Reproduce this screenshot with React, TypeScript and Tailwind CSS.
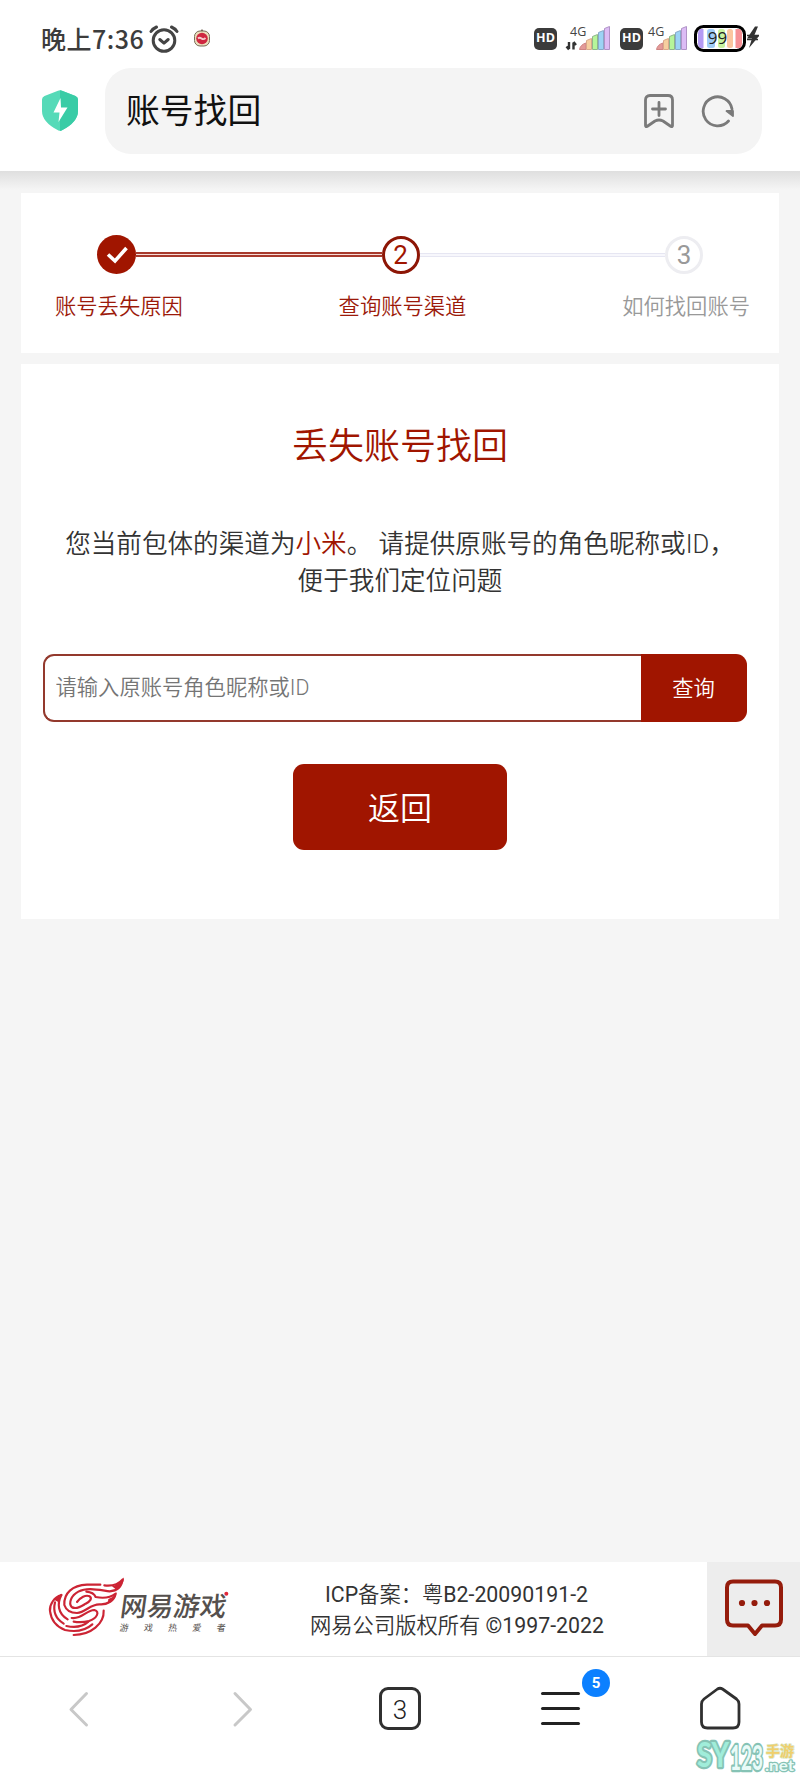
import React from 'react';

const RED = 'bg-[#a01500]';

const StatusBar: React.FC = () => (
  <div className="flex h-[68px] items-center pt-[9px] pl-[41px] pr-[40px] text-[#3c3c3c]">
    <span className="font-['Noto_Sans_CJK_SC',sans-serif] text-[25px] leading-none font-medium tracking-[0.5px]">晚上7:36</span>
    <svg className="ml-[5px] h-[28px] w-[30px]" viewBox="0 0 30 28" fill="none" stroke="#444" strokeWidth="3" strokeLinecap="round">
      <circle cx="15" cy="15.5" r="10.8" />
      <path d="M10.8 14.5l4.2 3.6 4.2-3.6" strokeLinejoin="round" />
      <path d="M2 6.5Q4 3.5 7.5 2M28 6.5Q26 3.5 22.5 2" />
    </svg>
    <svg className="mt-[-2px] ml-[14px] h-[20px] w-[18px]" viewBox="0 0 18 20">
      <path d="M9 1l2 3H7z" fill="#6b5b48" />
      <rect x="1.5" y="3" width="15" height="15" rx="5.5" fill="#ece0bd" stroke="#776c58" />
      <circle cx="9" cy="10.5" r="5.8" fill="#cf2740" />
      <path d="M5 10.5q1.5-1.5 3.5 0t4-.5" fill="none" stroke="#f7c9cd" strokeWidth="1.8" />
    </svg>
    <div className="ml-auto flex items-center">
      <HdBadge />
      <Signal arrows />
      <HdBadge />
      <Signal />
      <Battery />
    </div>
  </div>
);

const HdBadge: React.FC = () => (
  <span className="flex h-[22px] w-[23px] items-center justify-center rounded-[5px] bg-[#3b3b3b] font-['Open_Sans',sans-serif] text-[12.5px] font-bold text-white">HD</span>
);

const bars = [
  { x: 14, h: 7, fill: '#e39a98', edge: '#cf8482' },
  { x: 22, h: 11, fill: '#f6cf9f', edge: '#d9a98a' },
  { x: 28, h: 15, fill: '#b6f59a', edge: '#8fb58b' },
  { x: 34, h: 19, fill: '#9cd3f5', edge: '#88a9c9' },
  { x: 40, h: 23, fill: '#dcbcf5', edge: '#b093c7' },
];

const Signal: React.FC<{ arrows?: boolean }> = ({ arrows }) => (
  <svg className={arrows ? 'mt-[-2px] mr-[9px] ml-[8px] h-[28px] w-[46px]' : 'mt-[-2px] -ml-[1px] mr-[6px] h-[28px] w-[46px]'} viewBox="0 0 46 28">
    <text x={arrows ? 5 : 6} y="11.5" fontFamily="Open Sans, sans-serif" fontSize="12.5" fill="#444">4G</text>
    {arrows && (
      <path d="M4 18v7M1.5 22.5L4 25.5M8.5 25.5v-7M11 21l-2.5-3" fill="none" stroke="#333" strokeWidth="2.4" />
    )}
    {bars.map((b, i) => i === 0
      ? <path key={b.x} d="M14.5 25.5q1-5 6.5-6.5v6.5z" fill={b.fill} stroke={b.edge} />
      : <path key={b.x} d={`M${b.x - 0.5} 25.5v-${b.h - 2}l5-2v${b.h}z`} fill={b.fill} stroke={b.edge} strokeLinejoin="round" />)}
  </svg>
);

const Battery: React.FC = () => (
  <svg className="mt-[1px] h-[28px] w-[66px]" viewBox="0 0 66 28">
    <rect x="1.5" y="1.5" width="49" height="24" rx="8" fill="#fff" stroke="#000" strokeWidth="3" />
    <path d="M9.5 4H6.5Q4 5 4 9v9q0 4 2.5 5h3z" fill="#b49af3" />
    <rect x="13" y="4" width="8" height="19" rx="2.5" fill="#9fccf7" />
    <rect x="24" y="4" width="7" height="19" rx="2.5" fill="#c8f3a0" />
    <rect x="33" y="4" width="6" height="19" rx="2.5" fill="#fbc59f" />
    <path d="M41.5 4h4Q48 5 48 9v9q0 4-2.5 5h-4z" fill="#f69095" />
    <text x="23.5" y="19" textAnchor="middle" fontFamily="Open Sans, sans-serif" fontSize="17" fill="#222">99</text>
    <path d="M61 1.5l-8 12h5l-3 9.5 10-12h-5l4-9.5z" fill="#333" />
    <path d="M53 10.5h12M53 14.5h11" stroke="#333" strokeWidth="1.5" />
  </svg>
);

const AddressBar: React.FC = () => (
  <div className="flex items-center pl-[42px]">
    <svg className="h-[42px] w-[36px]" viewBox="0 0 36 42">
      <path d="M16 .8q2-1 4 0L33.5 6Q36 7 36 9.5V21q0 11-16 19.3-2 1-4 0Q0 32 0 21V9.5Q0 7 2.5 6z" fill="#56dab8" />
      <path d="M18 .2q1 0 2 .6L33.5 6Q36 7 36 9.5V21q0 11-16 19.3-1 .6-2 .6z" fill="#39cca6" />
      <path d="M18.5 8L11.5 22.5h6L16.5 32l9-14.5h-6.5z" fill="#fff" />
    </svg>
    <div className="ml-[27px] flex h-[86px] w-[657px] items-center rounded-[26px] bg-[#f4f4f4] pl-[21px] pr-[27px]">
      <span className="pt-[2px] text-[33.8px] leading-none text-[#111]">账号找回</span>
      <svg className="ml-auto h-[36px] w-[32px]" viewBox="0 0 32 36" fill="none" stroke="#7a7a7a" strokeWidth="2.8" strokeLinecap="round" strokeLinejoin="round">
        <path d="M7 2.5h18q4.500 0 4.500 4.500v25.500q0 1.500-1.500 1l-8-5.500q-4-2-8 0l-8 5.500q-1.500.5-1.500-1V7Q2.500 2.500 7 2.500z" />
        <path d="M16 9.5v13M9.5 16h13" />
      </svg>
      <svg className="ml-[26px] h-[34px] w-[34px]" viewBox="0 0 34 34" fill="none" stroke="#7a7a7a" strokeWidth="2.8" strokeLinecap="round">
        <path d="M27.5 27A14.5 14.5 0 1 1 31 15" />
        <path d="M25.5 17h6.500v5z" fill="#7a7a7a" strokeWidth="1.8" strokeLinejoin="round" />
      </svg>
    </div>
  </div>
);

const steps = [
  { n: 1, label: '账号丢失原因' },
  { n: 2, label: '查询账号渠道' },
  { n: 3, label: '如何找回账号' },
];

const Steps: React.FC = () => (
  <div className="mx-[21px] mt-[3px] h-[160px] bg-white px-[31px] pt-[42px]">
    <div className="flex items-center px-[45px]">
      <div className={`flex size-[39px] items-center justify-center rounded-full ${RED}`}>
        <svg className="h-[18px] w-[22px]" viewBox="0 0 22 18" fill="none" stroke="#fff" strokeWidth="3.6">
          <path d="M2 8.5l7 6.5L20.5 2" />
        </svg>
      </div>
      <div className="h-[5px] flex-1 border-y-2 border-[#a8392c] bg-[#f7dcd6]" />
      <div className="flex size-[38px] items-center justify-center rounded-full border-[3px] border-[#8d1606] text-[26px] leading-none text-[#a01500]">2</div>
      <div className="h-[4px] flex-1 border-y border-[#e6e6f2] bg-[#f7f7fc]" />
      <div className="flex size-[38px] items-center justify-center rounded-full border-[3px] border-[#ededf1] text-[26px] leading-none text-[#999]">3</div>
    </div>
    <div className="mt-[17px] -mr-[2px] flex justify-between pl-[3px]">
      {steps.map((s) => (
        <span key={s.n} className={`text-[21.3px] leading-[32px] font-[350] ${s.n === 3 ? 'text-[#999]' : 'text-[#9c1a0a]'}`}>{s.label}</span>
      ))}
    </div>
  </div>
);

const SearchPanel: React.FC = () => (
  <div className="mx-[21px] mt-[11px] flex h-[555px] flex-col items-center bg-white pt-[58px]">
    <h1 className="text-[36px] leading-[50px] font-[350] text-[#a01500]">丢失账号找回</h1>
    <p className="mt-[54px] text-center text-[25.6px] leading-[37px] font-[350] whitespace-nowrap text-[#333]">
      您当前包体的渠道为<span className="text-[#a01500]">小米</span>。 请提供原账号的角色昵称或ID，<br />
      便于我们定位问题
    </p>
    <div className="mt-[54px] mr-[11px] flex h-[68px] w-[704px]">
      <input
        className="min-w-0 flex-1 rounded-l-[11px] border-2 border-r-0 border-[#93392d] bg-white pb-[1px] pl-[11px] text-[21.3px] font-[350] outline-none placeholder:text-[#757575]"
        placeholder="请输入原账号角色昵称或ID"
      />
      <button className={`w-[106px] rounded-r-[11px] pt-[2px] text-[21.3px] text-white font-[350] ${RED}`}>查询</button>
    </div>
    <button className={`mt-[42px] h-[86px] w-[214px] rounded-[11px] pt-[3px] text-[32px] text-white font-[350] ${RED}`}>返回</button>
  </div>
);

const Logo: React.FC = () => (
  <svg className="mt-[-4px] h-[64px] w-[184px]" viewBox="140 74 552 192" fill="none">
    <g transform="translate(132 60)" stroke="#cc2434" strokeWidth="6.5" strokeLinecap="round" strokeLinejoin="round">
      <path d="M168 43H128C84 45 58 68 60 104Q68 128 98 128C124 126 138 101 166 102C190 104 210 90 214 70C198 82 178 85 154 80Q148 66 126 64" />
      <path d="M180 45C206 48 224 40 235 27C232 48 220 62 196 63C160 58 128 50 102 64C80 76 72 98 82 110C96 120 114 106 124 100C138 93 144 84 136 78C124 72 108 82 98 95" />
      <path d="M51 74C30 80 15 102 17 122C20 148 34 168 62 179Q112 190 144 162" />
      <path d="M51 74C38 100 40 130 70 147" />
      <path d="M32 96Q22 138 58 160" />
      <path d="M82 143C112 148 128 118 150 119C168 124 158 144 134 152Q112 158 88 154" />
      <path d="M66 167Q108 176 132 154" />
      <path d="M178 121C180 160 140 194 88 194" />
    </g>
    <path d="M335 108Q362 100 371 81Q371 104 348 118zM324 146Q346 138 350 122Q346 148 322 160zM183 132l-22 16 14 8z" fill="#cc2434" />
    <g fill="#55504d" fontFamily="Noto Sans CJK SC, sans-serif" transform="skewX(-8)">
      <text x="384" y="196" fontSize="80" fontWeight="500" textLength="318" lengthAdjust="spacingAndGlyphs">网易游戏</text>
      <text x="391" y="243" fontSize="27" textLength="318">游戏热爱者</text>
    </g>
    <circle cx="678" cy="130" r="6" fill="#e0283a" />
  </svg>
);

const Footer: React.FC = () => (
  <footer className="flex h-[95px] items-center border-b border-[#e4e4e4] bg-white pl-[47px]">
    <Logo />
    <div className="mt-[2px] ml-[79px] w-[293px] text-center text-[21.3px] leading-[31px] font-[350] whitespace-nowrap text-[#333]">
      <p><span className="font-normal">ICP</span>备案：粤<span className="font-normal">B2-20090191-2</span></p>
      <p>网易公司版权所有 <span className="font-normal">©1997-2022</span></p>
    </div>
    <div className="ml-auto flex h-[94px] w-[93px] items-center justify-center bg-[#ededed]">
      <svg className="mt-[-3px] h-[58px] w-[58px]" viewBox="0 0 58 58">
        <path d="M8 2.5h42q6 0 6 6v32q0 6-6 6H37L30 55 23 46.500H8q-6 0-6-6v-32q0-6 6-6z" fill="none" stroke="#951c0c" strokeWidth="4" strokeLinejoin="round" />
        <circle cx="17" cy="24" r="3.100" fill="#951c0c" />
        <circle cx="29.500" cy="24" r="3.100" fill="#951c0c" />
        <circle cx="42" cy="24" r="3.100" fill="#951c0c" />
      </svg>
    </div>
  </footer>
);

const BrowserNav: React.FC = () => (
  <nav className="relative grid h-[120px] grid-cols-5 bg-white pt-[29px]">
    <svg className="mt-[5px] ml-[68px] h-[38px] w-[22px]" viewBox="0 0 22 38" fill="none" stroke="#c8c8c8" strokeWidth="3" strokeLinecap="round" strokeLinejoin="round">
      <path d="M18.5 2.5L3 18.5l15.5 15.5" />
    </svg>
    <svg className="mt-[5px] ml-[71px] h-[38px] w-[22px]" viewBox="0 0 22 38" fill="none" stroke="#c8c8c8" strokeWidth="3" strokeLinecap="round" strokeLinejoin="round">
      <path d="M4 2.5l15.5 16L4 34" />
    </svg>
    <div className="mt-[1px] ml-[59px] flex h-[43px] w-[42px] items-center justify-center rounded-[9px] border-[3px] border-[#303030] pt-[3px] text-[26px] leading-none font-light text-[#222]">3</div>
    <div className="relative ml-[61px] w-[40px] pt-[6px]">
      <div className="h-[3px] w-[39px] rounded-full bg-[#222]" />
      <div className="mt-[12px] h-[3px] w-[39px] rounded-full bg-[#222]" />
      <div className="mt-[12px] h-[3px] w-[39px] rounded-full bg-[#222]" />
      <span className="absolute top-[-17px] left-[41px] flex size-[28px] items-center justify-center rounded-full bg-[#0c80ff] pt-[1px] text-[15px] font-bold text-white">5</span>
    </div>
    <svg className="ml-[59px] h-[44px] w-[42px]" viewBox="0 0 42 44" fill="none" stroke="#303030" strokeWidth="2.8" strokeLinejoin="round">
      <path d="M18.5 3q2.500-1.500 5 0l14 10q2.500 2 2.500 5v18q0 6-6 6H8.500q-6 0-6-6V18q0-3 2.500-5z" />
    </svg>
    {/* site watermark */}
    <svg className="absolute right-[4px] bottom-[3px] h-[38px] w-[102px] overflow-visible" viewBox="0 0 102 38" fontFamily="Lato, 'Noto Sans CJK SC', sans-serif" fontWeight="700" strokeLinejoin="round" paintOrder="stroke">
      <g stroke="#86c3b5" strokeWidth="4.5">
        <text x="3" y="31" fontSize="34" fill="#a0edda" textLength="32" lengthAdjust="spacingAndGlyphs">SY</text>
        <text x="36" y="34" fontSize="34" fill="#e9fbf8" textLength="33" lengthAdjust="spacingAndGlyphs">123</text>
        <text x="71" y="35" fontSize="16" fill="#e9fbf8" strokeWidth="2.5" textLength="29" lengthAdjust="spacingAndGlyphs">.net</text>
      </g>
      <text x="72" y="20" fontSize="14" fill="#f0cf6c" stroke="#d9e6c4" strokeWidth="1.5">手游</text>
    </svg>
  </nav>
);

const App: React.FC = () => {
  return (
    <div className="flex h-[1777px] w-[800px] flex-col overflow-hidden bg-[#f5f5f5] font-[Roboto,'Noto_Sans_CJK_SC',sans-serif]">
      <header className="h-[171px] shrink-0 bg-white">
        <StatusBar />
        <AddressBar />
      </header>
      <div className="h-[19px] shrink-0 bg-linear-to-b from-[#dfdfdf] to-[#f5f5f5]" />
      <Steps />
      <SearchPanel />
      <div className="mt-auto">
        <Footer />
        <BrowserNav />
      </div>
    </div>
  );
};

export default App;
